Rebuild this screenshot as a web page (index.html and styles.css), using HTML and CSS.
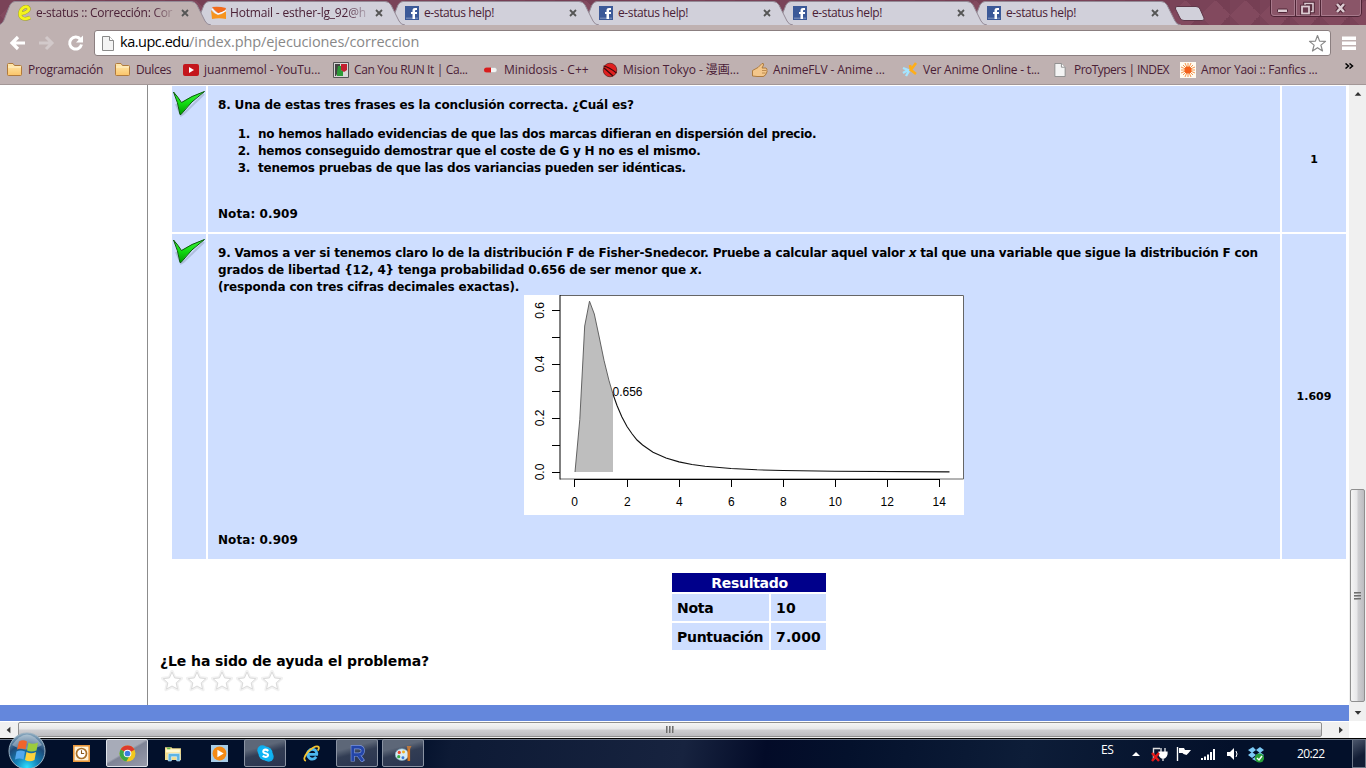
FILE: index.html
```html
<!DOCTYPE html>
<html lang="es">
<head>
<meta charset="utf-8">
<title>e-status :: Corrección</title>
<link rel="stylesheet" href="styles.css">
</head>
<body>
<svg width="0" height="0" class="defs">
  <defs>
    <linearGradient id="gCheck" x1="0" y1="0" x2="0" y2="1"><stop offset="0" stop-color="#3df53d"/><stop offset=".5" stop-color="#12dc12"/><stop offset="1" stop-color="#009a00"/></linearGradient>
    <linearGradient id="gFold" x1="0" y1="0" x2="0" y2="1"><stop offset="0" stop-color="#ffeab0"/><stop offset="1" stop-color="#fbc468"/></linearGradient>
    <radialGradient id="gOrb" cx=".5" cy=".95" r=".9"><stop offset="0" stop-color="#2fe0ff"/><stop offset=".35" stop-color="#1583b8"/><stop offset=".7" stop-color="#1d4a78"/><stop offset="1" stop-color="#7fa0b8"/></radialGradient>
    <symbol id="tab" viewBox="0 0 212 25"><path d="M-3 25C3 25 4 20 6 15L10 5Q12 1.500 15 1.500H191Q195 1.500 197 5L205 21Q207 25 211 25" stroke="#948a96"/></symbol>
    <symbol id="close" viewBox="0 0 8 8"><path d="M1 1l6 6M7 1l-6 6" stroke="#555" stroke-width="1.800"/></symbol>
    <symbol id="fb" viewBox="0 0 14 14"><path fill="#3b5998" d="M0 0h14v14H0z"/><path fill="#6d84b4" d="M1 11.500h12V13H1z"/><path fill="#fff" d="M7.500 13V8H6V6h1.500V4.500C7.500 2.800 8.500 2 10 2h2v2h-1.200c-.6 0-.8.3-.8.900V6h2v2h-2v5z"/></symbol>
    <symbol id="folder" viewBox="0 0 15 13"><path d="M.5 11.500v-10q0-1 1-1H6l1.500 2h6q1 0 1 1v8q0 1-1 1h-12q-1 0-1-1z" fill="url(#gFold)" stroke="#b07a3c"/><path d="M1 4h13" stroke="#fff2cc"/></symbol>
    <symbol id="page" viewBox="0 0 12 15"><path d="M.5.5h7l4 4v10H.5z" fill="#f4f4f4" stroke="#8a8a8a"/><path d="M7.500.5v4h4" fill="#fff" stroke="#8a8a8a"/></symbol>
    <symbol id="check" viewBox="0 0 34 28"><path d="M4 14L9 25.500 11.500 24 32 4" fill="none" stroke="#8fa0bc" stroke-width="2" opacity=".5"/><path d="M1.500 2Q6 7 9.500 12.500Q19 6 32.500 1.500Q19 11 9 24.500H8Q6 12 1.500 2z" fill="url(#gCheck)" stroke="#0a5a0a"/></symbol>
    <symbol id="star" viewBox="0 0 22 22"><path d="M11 1.500l2.700 6.200 6.800.7-5 4.500 1.500 6.800L11 16.500l-6 3.200 1.500-6.800-5-4.500 6.800-.7z" fill="#fff" stroke="#f1f1f1" stroke-width="3.200" stroke-linejoin="round"/><path d="M11 2l2.600 5.900 6.200.8-4.600 4.200 1.300 6.200L11 16l-5.500 3.100 1.300-6.200L2.200 8.700l6.200-.8z" fill="#fff" stroke="#dadada" stroke-linejoin="round"/></symbol>
  </defs>
</svg>

<header class="tabstrip">
  <div class="tab active"><svg class="shape"><use href="#tab"/></svg>
    <svg class="fav" viewBox="0 0 16 16"><path d="M4.500 8.500C9 8 13 5 11.500 3 9.500 0 4 2.500 3 8c-.5 6 5 7 10 4.500" fill="none" stroke="#a0a030" stroke-width="3.800"/><path d="M4.500 8.500C9 8 13 5 11.500 3 9.500 0 4 2.500 3 8c-.5 6 5 7 10 4.500" fill="none" stroke="#f4f41c" stroke-width="2.800"/></svg>
    <span class="title t1">e-status :: Corrección: Cor</span><svg class="x"><use href="#close"/></svg></div>
  <div class="tab"><svg class="shape"><use href="#tab"/></svg>
    <svg class="fav" viewBox="0 0 16 16"><path fill="#f26a1b" d="M1 2q7-1 14 1l-1 3q-6 2-7 2Q3 5 1 2z"/><path fill="#f7941d" d="M0 5q3 4 7 5 5-1 8-4v8q-7-1.500-14 0z"/><path d="M1 4q3 4 6 5 4-1 8-3.500" stroke="#fff" fill="none" stroke-width="1.200"/></svg>
    <span class="title t2">Hotmail - esther-lg_92@h</span><svg class="x"><use href="#close"/></svg></div>
  <div class="tab"><svg class="shape"><use href="#tab"/></svg><svg class="fav fb"><use href="#fb"/></svg><span class="title t3">e-status help!</span><svg class="x"><use href="#close"/></svg></div>
  <div class="tab"><svg class="shape"><use href="#tab"/></svg><svg class="fav fb"><use href="#fb"/></svg><span class="title t3">e-status help!</span><svg class="x"><use href="#close"/></svg></div>
  <div class="tab"><svg class="shape"><use href="#tab"/></svg><svg class="fav fb"><use href="#fb"/></svg><span class="title t3">e-status help!</span><svg class="x"><use href="#close"/></svg></div>
  <div class="tab"><svg class="shape"><use href="#tab"/></svg><svg class="fav fb"><use href="#fb"/></svg><span class="title t3">e-status help!</span><svg class="x"><use href="#close"/></svg></div>
  <svg class="newtab" viewBox="0 0 32 16"><path d="M3 .5H22Q25 .5 26 3L30 12Q31 14.500 28 14.500H10Q7 14.500 6 12L1.500 3Q1 .5 3 .5z" fill="#d1d0da" stroke="#5d3547"/></svg>
  <svg class="winbtns" viewBox="0 0 94 18"><path d="M1.500 -2V13Q1.500 16.500 5 16.500H89Q92.500 16.500 92.500 13V-2" fill="#8a5568" stroke="#4e2435"/><path d="M26.500 0V16M51.500 0V16" stroke="#4e2435"/><path d="M2.500 0V13Q2.500 15.500 5 15.500H25.500V0M27.500 0V15.500H50.500V0M52.500 0V15.500H89Q91.500 15.500 91.500 13V0" fill="none" stroke="#a87a8c"/><rect x="8.500" y="9" width="10" height="3.500" rx="1" fill="#dccbd2" stroke="#4e2435"/><path d="M36 6V3.500h8v8H41" fill="none" stroke="#4e2435" stroke-width="3.500"/><path d="M36 6V3.500h8v8H41" fill="none" stroke="#dccbd2" stroke-width="1.600"/><rect x="33" y="6.500" width="7" height="7" fill="none" stroke="#4e2435" stroke-width="3.500"/><rect x="33" y="6.500" width="7" height="7" fill="#6a3a4e" stroke="#dccbd2" stroke-width="1.800"/><path d="M68 4l7 8M75 4l-7 8" stroke="#4e2435" stroke-width="4.500"/><path d="M68 4l7 8M75 4l-7 8" stroke="#dccbd2" stroke-width="2.600"/></svg>
</header>

<nav class="toolbar">
  <svg class="navs" viewBox="0 0 94 32"><path d="M25 18H13M18 12l-6 6 6 6" fill="none" stroke="#fff" stroke-width="3.200"/><path d="M39 18H51M46 12l6 6-6 6" fill="none" stroke="#d2c9ca" stroke-width="3"/><path d="M80.500 14.500A6 6 0 1 0 81.500 19.500" fill="none" stroke="#fff" stroke-width="3"/><path d="M83 10.500v7h-7z" fill="#fff"/></svg>
  <div class="omnibox"><svg class="pg"><use href="#page"/></svg><span class="url"><b>ka.upc.edu</b><i>/index.php/ejecuciones/correccion</i></span><svg class="bstar" viewBox="0 0 19 19"><path d="M9.500 1.500l2.100 5.600 5.900.3-4.600 3.700 1.600 5.900-5-3.300-5 3.300 1.600-5.900L1.500 7.400l5.900-.3z" fill="#fff" stroke="#888" stroke-width="1.200" stroke-linejoin="round"/></svg></div>
  <svg class="menu" viewBox="0 0 14 15"><path d="M0 2.200h14M0 7.200h14M0 12.200h14" stroke="#fff" stroke-width="3.600"/></svg>
</nav>

<nav class="bookmarks">
  <a class="w108 s30"><svg class="ic" viewBox="0 0 16 16"><use href="#folder" y="1" width="15" height="13"/></svg><span>Programación</span></a>
  <a class="w68 s36"><svg class="ic" viewBox="0 0 16 16"><use href="#folder" y="1" width="15" height="13"/></svg><span>Dulces</span></a>
  <a class="w150 s12"><svg class="ic" viewBox="0 0 16 16"><rect y="2" width="16" height="12" rx="2" fill="#c4161c"/><path d="M6 5l5 3-5 3z" fill="#fff"/></svg><span>juanmemol - YouTu...</span></a>
  <a class="w150 s36"><svg class="ic" viewBox="0 0 16 16"><path fill="#d8d8d8" stroke="#555" d="M.5.5h15v15H.5z"/><path fill="#444" d="M2 2h5v4l-4 8H2z"/><path fill="#2d9a38" d="M5 4h3v4l2 1v5H4v-4z"/><path fill="#c22030" d="M8 2h6v6l-3 2-3-2z"/></svg><span>Can You RUN It | Ca...</span></a>
  <a class="w119"><svg class="ic" viewBox="0 0 16 16"><rect x="1" y="5.500" width="13" height="5" rx="2.500" fill="#f3f3f3" stroke="#aaa" stroke-width=".5"/><path d="M8 5.500H3.500a2.500 2.500 0 0 0 0 5H8z" fill="#d81c1c"/></svg><span>Minidosis - C++</span></a>
  <a class="w150 s06"><svg class="ic" viewBox="0 0 16 16"><circle cx="8" cy="8" r="6.800" fill="#e02020" stroke="#5b1515" stroke-width=".7"/><path d="M1.500 4Q7 5 14.500 11M2 6l9 8" stroke="#3a0a0a" fill="none" stroke-width="1.200"/></svg><span>Mision Tokyo - 漫画...</span></a>
  <a class="w150 s12"><svg class="ic" viewBox="0 0 16 16"><path d="M.5 8.500L6 5.500 10 1.500q2-.5 1.500 1.500L10 6h4q1.500 1 .8 2.500.8 1.500-.5 2.500.2 1.500-1.300 2-.5 1.500-2 1.500H5L.5 14z" fill="#f3c68a" stroke="#a87436" stroke-width=".9"/><path d="M10 8.500h4M10 11h3.500" stroke="#a87436" stroke-width=".7"/></svg><span>AnimeFLV - Anime ...</span></a>
  <a class="w151 s22"><svg class="ic" viewBox="0 0 16 16"><path d="M1 6l5 2-5 3M7 9l-3 5" stroke="#a4e4ff" stroke-width="2.400" fill="none"/><path d="M14 1L8 9M8 3l1 5 5 4" stroke="#ffae18" stroke-width="2.600" fill="none"/></svg><span>Ver Anime Online - t...</span></a>
  <a class="w127 s54"><svg class="ic" viewBox="0 0 16 16"><use href="#page" x="1" y="1" width="12" height="14"/></svg><span>ProTypers | INDEX</span></a>
  <a class="w164 s22"><svg class="ic" viewBox="0 0 16 16"><path fill="#fffaf0" d="M0 0h16v16H0z"/><path d="M8 1v14M1 8h14M3 3l10 10M13 3L3 13M5 1l6 14M11 1L5 15M1 5l14 6M15 5L1 11" stroke="#f08a3c" stroke-width=".9"/><circle cx="8" cy="8" r="3.500" fill="#f4601c"/></svg><span>Amor Yaoi :: Fanfics ...</span></a>
  <svg class="more" viewBox="0 0 9 6"><path d="M.5.5l3 2.500-3 2.500M4.500.5l3 2.500-3 2.500" fill="none" stroke="#000" stroke-width="1.500"/></svg>
</nav>

<div class="viewport">
  <main class="page">
    <aside class="side"></aside>
    <section class="content">
      <div class="questions">
        <div class="cell mark"><svg><use href="#check"/></svg></div>
        <div class="cell q">
          <p><span class="q8">8. Una de estas tres frases es la conclusión correcta. ¿Cuál es?</span></p>
          <ol><li>no hemos hallado evidencias de que las dos marcas difieran en dispersión del precio.</li><li>hemos conseguido demostrar que el coste de G y H no es el mismo.</li><li>tenemos pruebas de que las dos variancias pueden ser idénticas.</li></ol>
          <p class="nota">Nota: 0.909</p>
        </div>
        <div class="cell pts">1</div>

        <div class="cell mark"><svg><use href="#check"/></svg></div>
        <div class="cell q">
          <p><span class="q9">9. Vamos a ver si tenemos claro lo de la distribución F de Fisher-Snedecor. Pruebe a calcular aquel valor <em>x</em> tal que una variable que sigue la distribución F con</span><br><span class="q8">grados de libertad {12, 4} tenga probabilidad 0.656 de ser menor que <em>x</em>.</span><br><span class="q8">(responda con tres cifras decimales exactas).</span></p>
          <svg class="chart" viewBox="0 0 440 220">
            <path fill="#fff" d="M0 0h440v220H0z"/>
            <path fill="#bebebe" d="M51 177L55.800 124.400 60.700 31 65.500 6.200 70.300 19 75.200 42 80 65.300 84.900 85.200 89 99.200V177z"/>
            <path fill="none" stroke="#555" d="M51 177L55.800 124.400 60.700 31 65.500 6.200 70.300 19 75.200 42 80 65.300 84.900 85.200 89 99.200" stroke-width=".9"/>
            <path fill="none" stroke="#111" d="M89 99.200L93 110.500 97.800 121.800 103 131.500 108.200 139 113 145 118.600 150 129 157.200 142 163.100 155 166.900 168 169.500 181 171.300 207 173.500 233 174.800 259 175.500 311 176.300 425.500 176.900" stroke-width="1.100"/>
            <path d="M36 .5H439.500V184H36" fill="none" stroke="#666"/>
            <path d="M36 0V184.500M28 15.500h8M28 42.500h8M28 69.500h8M28 96.500h8M28 123.500h8M28 150.500h8M28 177.500h8M50.500 184v8M103.500 184v8M155.500 184v8M207.500 184v8M259.500 184v8M311.500 184v8M363.500 184v8M415.500 184v8M50 184.500H416" fill="none" stroke="#000"/>
            <g class="axis"><text x="50.500" y="211">0</text><text x="103.300" y="211">2</text><text x="155.300" y="211">4</text><text x="207.300" y="211">6</text><text x="259.300" y="211">8</text><text x="311.300" y="211">10</text><text x="363.300" y="211">12</text><text x="415.300" y="211">14</text>
            <text transform="translate(20 177)rotate(-90)">0.0</text><text transform="translate(20 123)rotate(-90)">0.2</text><text transform="translate(20 69)rotate(-90)">0.4</text><text transform="translate(20 15.500)rotate(-90)">0.6</text><text x="103.500" y="101">0.656</text></g>
          </svg>
          <p class="nota">Nota: 0.909</p>
        </div>
        <div class="cell pts">1.609</div>
      </div>

      <div class="result">
        <div class="rh">Resultado</div>
        <div class="rc">Nota</div><div class="rc num">10</div>
        <div class="rc">Puntuación</div><div class="rc num">7.000</div>
      </div>
      <div class="rate"><span>¿Le ha sido de ayuda el problema?</span>
        <div class="stars"><svg><use href="#star"/></svg><svg><use href="#star"/></svg><svg><use href="#star"/></svg><svg><use href="#star"/></svg><svg><use href="#star"/></svg></div>
      </div>
    </section>
  </main>
  <div class="vscroll"><svg viewBox="0 0 17 17"><path d="M5 11l3.500-4 3.500 4z" fill="#333"/></svg><div class="vthumb"><i></i><i></i><i></i></div><svg viewBox="0 0 17 17"><path d="M5 7l3.500 4L12 7z" fill="#333"/></svg></div>
</div>
<div class="hscroll"><svg viewBox="0 0 17 17"><path d="M10.500 5l-4 3.500 4 3.500z" fill="#333"/></svg><div class="hthumb"><i></i><i></i><i></i></div><svg viewBox="0 0 17 17"><path d="M7 5l4 3.500L7 12z" fill="#333"/></svg></div>

<footer class="taskbar">
  <svg class="orb" viewBox="0 0 38 38"><circle cx="19" cy="19" r="18" fill="url(#gOrb)" stroke="#9db4c4"/><path d="M4 13Q19 -8 34 13 19 22 4 13z" fill="#fff" opacity=".35"/><path d="M11 9.500q4-2.500 8 0l-1.500 8q-4-2-8.500 0z" fill="#f0642a"/><path d="M20.500 10.500q4 2.500 9.500 0l-1.500 8q-5 2-9.500 0z" fill="#9ccc3c"/><path d="M8.500 19.500q4-2 8.500 0l-1.500 8q-4-2-8.500 0z" fill="#52a8ee"/><path d="M18.500 20q4.500 2.500 9.500 0l-1.500 8q-5 2.500-9.500 0z" fill="#fdd23c"/></svg>
  <div class="app"><svg viewBox="0 0 16 16"><path fill="#e8963a" d="M0 0h16v16H0z"/><path fill="#fff3d8" d="M1.500 1.500h13v13h-13z"/><circle cx="8" cy="8" r="4.700" fill="#fff" stroke="#a8702a" stroke-width="1.600"/><path d="M8 5v3h2.500" stroke="#8a5a20" fill="none"/></svg></div>
  <div class="app open hot"><svg viewBox="0 0 16 16"><circle cx="8" cy="8" r="7.500" fill="#f2c81e"/><path d="M8 8L1.500 4.300A7.500 7.500 0 0 1 14.700 4.500z" fill="#dd3a2c"/><path d="M8 8L1.500 4.300A7.500 7.500 0 0 0 7 15.400L10 10z" fill="#3aa648"/><circle cx="8" cy="8" r="3.600" fill="#fff"/><circle cx="8" cy="8" r="2.700" fill="#3b7de0"/></svg></div>
  <div class="app"><svg viewBox="0 0 16 16"><path d="M0 2h6l1 1h8v11H0z" fill="#f2dc8c"/><path d="M1 4h13v3H1z" fill="#fff7d0"/><path d="M3 15V9q0-1 1-1h9q1 0 1 1v6h-3v-4H6v4z" fill="#5cb4e4" stroke="#d8f0ff" stroke-width=".6"/><path fill="#58b848" d="M2 2.500h3V4H2z"/></svg></div>
  <div class="app"><svg viewBox="0 0 16 16"><path fill="#a8cde8" d="M0 0h16v16H0z"/><circle cx="8" cy="8" r="6.500" fill="#f48a14"/><path d="M6 4.500L12 8l-6 3.500z" fill="#fff"/></svg></div>
  <div class="app open"><svg viewBox="0 0 16 16"><circle cx="5" cy="5" r="4.700" fill="#10aeee"/><circle cx="11" cy="11" r="4.700" fill="#10aeee"/><circle cx="8" cy="8" r="6.700" fill="#10b4f4"/><path d="M10.700 5.500Q8 3.500 6.200 5 5 7 8 7.800 11.500 8.600 10 10.600 8 12 5.300 10.300" stroke="#fff" stroke-width="1.900" fill="none"/></svg></div>
  <div class="app"><svg viewBox="0 0 18 18"><path d="M14 12.500Q11 16.500 7 14 3.500 11 5.500 7 8.500 3 13 5.500q2 2 1.500 4.500H6" stroke="#4cb8f0" stroke-width="3" fill="none"/><path d="M3 17Q-1 15 5 7.500 13 0 16.500 2q1 1.500-1 4" stroke="#f4c430" stroke-width="1.900" fill="none"/></svg></div>
  <div class="app open"><svg viewBox="0 0 16 16"><path d="M3.500 15.500V2H9q4 0 4 3.500T9 9H4M8.500 9l5 6.500" fill="none" stroke="#7f98dc" stroke-width="3.800"/><path d="M3.500 15V2H9q4 0 4 3.500T9 9H4M8.500 9l4.500 6" fill="none" stroke="#2345a8" stroke-width="2.600"/></svg></div>
  <div class="app open last"><svg viewBox="0 0 16 16"><ellipse cx="6.500" cy="9" rx="6.300" ry="5.500" fill="#d8ecf4" stroke="#7fa8c0" stroke-width=".7"/><circle cx="4" cy="7" r="1.500" fill="#e84830"/><circle cx="8" cy="6.500" r="1.400" fill="#f0b020"/><circle cx="3.500" cy="11" r="1.500" fill="#38a848"/><circle cx="7.500" cy="12" r="1.400" fill="#3878d8"/><path d="M13 2v13" stroke="#d87820" stroke-width="2.400"/><path d="M11 1h4.500L14 4h-2z" fill="#b87840"/></svg></div>
  <span class="lang">ES</span>
  <svg class="tray" viewBox="0 0 134 20"><path d="M1 12l4-4 4 4z" fill="#fff"/><path d="M29 4.500h-6.500v11" stroke="#ddd" fill="none" stroke-width="1.400"/><path d="M28 8h8v2q-1 4-4 4t-4-4zM30 4v4M34 4v4M32 13v4" fill="#fff" stroke="#fff" stroke-width="1.200"/><path d="M21 9l7 8M28 9l-7 8" stroke="#e01818" stroke-width="2.500"/><path d="M46.500 3v14" stroke="#fff" stroke-width="1.400"/><path d="M48 4h5l1 2h6l-2.500 3-2 2-3-1-1-1H48z" fill="#fff"/><path d="M71 14v2M74 12.500V16M77 10.500V16M80 8v8M83 5v11" stroke="#fff" stroke-width="2"/><path d="M96 8h3l4-4v12l-4-4h-3z" fill="#fff"/><path d="M105 7q2 3 0 6" stroke="#fff" fill="none"/><path d="M117 6l5-3 3 3-4 3zM125 6l4-3 4 3-4 3zM117 11l4-3 4 3-4 3zM125 11l4-3 4 3-4 3zM121 15l4-2.500 4 2.500-4 2z" fill="#7ccaf6"/><circle cx="128.500" cy="14" r="4.600" fill="#28a038"/><path d="M126 14l2 2 3-4" stroke="#fff" fill="none" stroke-width="1.400"/></svg>
  <span class="clock">20:22</span>
  <span class="desk"></span>
</footer>
</body>
</html>
```
FILE: styles.css
```css
* { box-sizing: border-box; }
body { margin: 0; width: 1366px; height: 768px; overflow: hidden; display: flex; flex-direction: column; background: #fff; font-family: "Open Sans", "Noto Sans CJK JP", sans-serif; font-size: 12px; color: #4a2036; }
svg { display: block; flex: none; }
.defs { position: absolute; }

.tabstrip { height: 25px; display: flex; flex: none; position: relative; background-color: #82495e; background-image: conic-gradient(from 45deg at 50% 50%, #763f54 0 25%, transparent 0 50%, #7a4358 0 75%, transparent 0); background-size: 30px 30px; background-position: 0 -15px; }
.tab { position: relative; width: 194px; height: 25px; padding-left: 17px; display: flex; align-items: center; flex: none; color: #4a2036; }
.tab:nth-child(1) { z-index: 6; } .tab:nth-child(2) { z-index: 5; } .tab:nth-child(3) { z-index: 4; } .tab:nth-child(4) { z-index: 3; } .tab:nth-child(5) { z-index: 2; } .tab:nth-child(6) { z-index: 1; }
.shape { position: absolute; left: 0; top: 0; width: 212px; height: 25px; fill: #d1d0da; }
.tab.active .shape { fill: #bfb1b1; }
.fav, .title, .x { position: relative; }
.fav { width: 16px; height: 16px; margin-right: 3px; }
.fav.fb { width: 14px; height: 14px; margin: 1px 5px 0 0; }
.title { width: 145px; white-space: nowrap; line-height: 18px; }
.t1 { letter-spacing: -.27px; } .t2 { letter-spacing: -.19px; } .t3 { letter-spacing: -.38px; }
.t1, .t2 { -webkit-mask-image: linear-gradient(90deg, #000 80%, transparent 98%); mask-image: linear-gradient(90deg, #000 80%, transparent 98%); }
.x { width: 8px; height: 8px; }
.newtab { width: 32px; height: 16px; margin: 6px 0 0 10px; }
.winbtns { width: 94px; height: 18px; margin-left: 63px; }

.toolbar { height: 32px; flex: none; display: flex; background: #bfb1b1; }
.navs { width: 94px; height: 32px; }
.omnibox { width: 1237px; height: 26px; margin-top: 5px; background: #fff; border: 1px solid #8b7f80; border-radius: 3px; display: flex; align-items: center; padding: 0 3px 0 7px; }
.pg { width: 12px; height: 15px; margin-right: 6px; }
.url { flex: 1; font-size: 14.5px; line-height: 22px; margin-top: -2px; white-space: nowrap; color: #000; }
.url b { font-weight: 400; letter-spacing: -.48px; }
.url i { font-style: normal; color: #888; letter-spacing: -.1px; }
.bstar { width: 19px; height: 19px; }
.menu { width: 14px; height: 15px; margin: 11px 0 0 11px; }

.bookmarks { height: 28px; flex: none; display: flex; background: #bfb1b1; border-bottom: 1px solid #a39797; padding-left: 7px; align-items: flex-start; }
.bookmarks a { display: flex; align-items: center; height: 26px; flex: none; white-space: nowrap; line-height: 18px; }
.ic { width: 16px; height: 16px; margin-right: 5px; }
.w108 { width: 108px; } .w68 { width: 68px; } .w150 { width: 150px; } .w119 { width: 119px; } .w151 { width: 151px; } .w127 { width: 127px; } .w164 { width: 164px; }
.s06 { letter-spacing: -.06px; } .s12 { letter-spacing: -.11px; } .s22 { letter-spacing: -.21px; } .s30 { letter-spacing: -.3px; } .s36 { letter-spacing: -.36px; } .s54 { letter-spacing: -.54px; }
.more { width: 9px; height: 6px; margin: 6px 0 0 1px; }

.viewport { height: 636px; flex: none; display: flex; background: #fff; }
.page { width: 1349px; height: 636px; display: flex; border-bottom: 16px solid #6487dc; }
.side { width: 148px; border-right: 1px solid #8c8c8c; }
.content { flex: 1; padding: 1px 3px 0 12px; font-family: "DejaVu Sans", sans-serif; font-weight: 700; font-size: 12px; line-height: 17px; color: #000; }
.questions { display: grid; grid-template-columns: 34px 1072px 64px; grid-template-rows: 146px 325px; gap: 2px; margin-left: 12px; }
.cell { background: #cedeff; }
.mark svg { width: 34px; height: 28px; margin-top: 4px; }
.q { padding: 11px 10px 0; white-space: nowrap; }
.q p { margin: 0; }
.q8 { letter-spacing: -.155px; }
.q9 { letter-spacing: -.194px; }
.q ol { margin: 12px 0 29px; padding-left: 36px; letter-spacing: -.245px; }
.q li { padding-left: 4px; }
.nota { letter-spacing: .08px; }
.pts { font-size: 11px; display: flex; align-items: center; justify-content: center; }
.chart { width: 440px; height: 220px; margin: -1px 0 17px 306px; }
.axis { font: 12px "Liberation Sans", sans-serif; text-anchor: middle; fill: #000; }
.result { display: grid; grid-template-columns: 97px 55px; grid-template-rows: 19px 27px 27px; gap: 2px; width: 154px; margin: 14px 0 0 512px; font-size: 14px; letter-spacing: -.28px; }
.rh { grid-column: 1 / 3; background: #00008b; color: #fff; text-align: center; line-height: 20px; padding-left: 1px; }
.rc { background: #cedeff; padding-left: 5px; line-height: 28px; }
.rc.num { letter-spacing: .14px; }
.rate { font-size: 14px; line-height: 20px; margin-top: 1px; letter-spacing: -.1px; }
.stars { display: flex; gap: 3px; padding: 0 0 0 1px; margin-top: -1px; }
.stars svg { width: 22px; height: 22px; }

.vscroll { width: 17px; padding-left: 1px; display: flex; flex-direction: column; background: #f0f0f0; }
.vscroll svg { width: 16px; height: 17px; }
.vthumb { width: 15px; height: 213px; margin: 387px 0 2px; border: 1px solid #8f8f8f; border-radius: 2px; background: linear-gradient(90deg, #f5f5f5, #e6e6e8 48%, #cfcfd2 52%, #bcbcc0); display: flex; flex-direction: column; gap: 1px; align-items: center; justify-content: center; }
.vthumb i { width: 7px; height: 2px; background: linear-gradient(#555, #bbb); }
.hscroll { width: 1349px; height: 17px; flex: none; display: flex; background: #f0f0f0; border-top: 1px solid #fff; }
.hscroll svg { width: 17px; height: 16px; }
.hthumb { width: 1304px; height: 15px; margin: 0 10px 0 1px; border: 1px solid #8f8f8f; border-radius: 2px; background: linear-gradient(#f5f5f5, #e6e6e8 48%, #cfcfd2 52%, #bcbcc0); display: flex; gap: 1px; align-items: center; justify-content: center; }
.hthumb i { width: 2px; height: 7px; background: linear-gradient(90deg, #555, #bbb); }

.taskbar { height: 30px; flex: none; position: relative; display: flex; border-top: 1px solid #000; background: linear-gradient(100deg, #02102b 0 30%, #0d1a35 33%, #17233f 50%, #030b28 56%, #04112c 62%, #0d1d38 75%, #03102a 90%); box-shadow: inset 0 1px #6d7788; }
.orb { width: 38px; height: 38px; margin: -7px 14px 0 8px; position: relative; }
.app { width: 42px; height: 28px; margin-right: 4px; display: flex; align-items: center; justify-content: center; flex: none; }
.app svg { width: 17px; height: 17px; }
.open { border: 1px solid #8a93a3; border-radius: 2px; background: linear-gradient(165deg, #5d6778 0 30%, #323d54 50%, #2a3550); }
.hot { border-color: #dfe3ea; background: linear-gradient(150deg, #a7abb8 0 45%, #7f8496 50%, #979bab); }
.lang { margin-left: 673px; width: 27px; font-size: 12px; line-height: 22px; letter-spacing: -.3px; color: #fff; }
.tray { width: 134px; height: 20px; margin: 5px 0 0 3px; }
.clock { margin-left: 32px; width: 55px; font-size: 12px; line-height: 29px; color: #fff; letter-spacing: -.6px; white-space: nowrap; }
.desk { width: 14px; border: 1px solid #6d7788; background: linear-gradient(150deg, #4b566b, #121d35 60%); }
```
